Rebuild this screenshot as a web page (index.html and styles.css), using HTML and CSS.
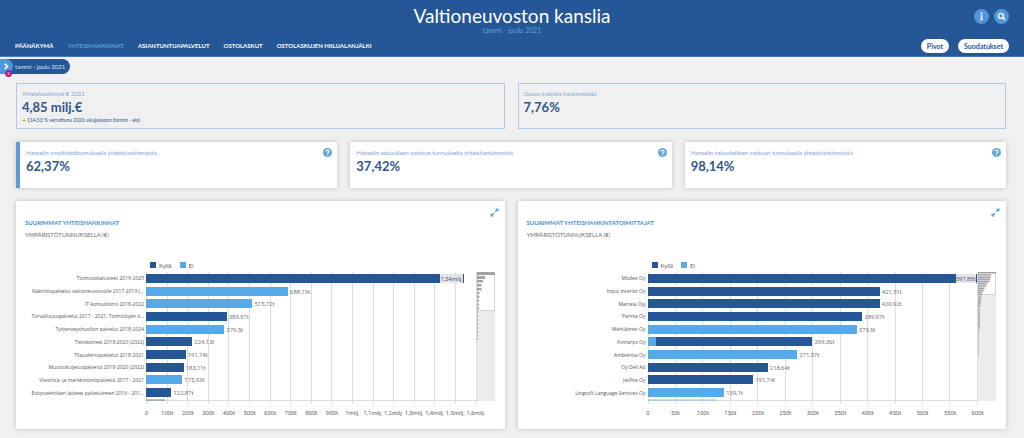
FILE: index.html
```html
<!DOCTYPE html>
<html lang="fi">
<head>
<meta charset="utf-8">
<meta name="viewport" content="width=device-width, initial-scale=1">
<title>Valtioneuvoston kanslia</title>
<link rel="stylesheet" href="styles.css">
</head>
<body>
<svg width="0" height="0" class="defs" aria-hidden="true">
  <symbol id="help" viewBox="0 0 18 18"><circle cx="9" cy="9" r="9" fill="#5fa8dc"/><path d="M6 7.2C6 3.4 12.2 3.4 12.2 7C12.2 9 9.2 9 9.2 11" fill="none" stroke="#fff" stroke-width="2.3"/><circle cx="9.2" cy="13.8" r="1.4" fill="#fff"/></symbol>
  <symbol id="expand" viewBox="0 0 18 18"><path d="M10.500 1H17V7.500L14.800 5.300L11.500 8.600L9.400 6.500L12.700 3.200ZM7.500 17H1V10.500L3.200 12.700L6.500 9.400L8.600 11.500L5.300 14.800Z" fill="#56a5e0"/></symbol>
</svg>
<header class="header">
  <div class="brand">
    <div class="heading">
      <h1 class="title">Valtioneuvoston kanslia</h1>
      <p class="period">tammi - joulu 2021</p>
    </div>
    <div class="tools">
      <button class="round" aria-label="Tietoja"><svg viewBox="0 0 15 15"><path d="M6.700 3.600H8.300V5.200H6.700ZM6.400 6.200H8.300V10.200H8.800V11.200H6.200V10.200H6.800V7.200H6.400Z" fill="#fff"/></svg></button>
      <button class="round" aria-label="Haku"><svg viewBox="0 0 15 15"><circle cx="6.900" cy="6.900" r="2.500" fill="none" stroke="#fff" stroke-width="1.400"/><path d="M8.700 8.700L11 11" stroke="#fff" stroke-width="1.700"/></svg></button>
    </div>
  </div>
  <div class="menu">
    <nav class="nav">
      <a href="#">PÄÄNÄKYMÄ</a>
      <a href="#" class="active" aria-current="page">YHTEISHANKINNAT</a>
      <a href="#">ASIANTUNTIJAPALVELUT</a>
      <a href="#">OSTOLASKUT</a>
      <a href="#">OSTOLASKUJEN HIILIJALANJÄLKI</a>
    </nav>
    <div class="actions">
      <button class="pill">Pivot</button>
      <button class="pill">Suodatukset</button>
    </div>
  </div>
</header>
<button class="chip">
  <span class="chip-icon"><svg viewBox="0 0 15 15"><path d="M5.500 4.300L8.700 7.500L5.500 10.700" fill="none" stroke="#fff" stroke-width="1.900"/></svg><span class="badge">2</span></span>
  tammi - joulu 2021
</button>
<main class="main">
  <section class="row two">
    <article class="kpi outlined">
      <h2 class="kpi-label">Yhteishankinnat € 2021</h2>
      <p class="kpi-value">4,85 milj.€</p>
      <p class="kpi-note"><span class="up"></span>114,53 % verrattuna 2020 aikajaksoon (tammi - elo)</p>
    </article>
    <article class="kpi outlined">
      <h2 class="kpi-label">Osuus kaikista hankinnoista</h2>
      <p class="kpi-value">7,76%</p>
    </article>
  </section>
  <section class="row three">
    <article class="kpi card selected">
      <div><h2 class="kpi-label">Hanselin ympäristötunnuksella yhteishankinnoista</h2><p class="kpi-value">62,37%</p></div>
      <button class="icon" aria-label="Ohje"><svg><use href="#help"/></svg></button>
    </article>
    <article class="kpi card">
      <div><h2 class="kpi-label">Hanselin sosiaalisen vastuun tunnuksella yhteishankinnoista</h2><p class="kpi-value">37,42%</p></div>
      <button class="icon" aria-label="Ohje"><svg><use href="#help"/></svg></button>
    </article>
    <article class="kpi card">
      <div><h2 class="kpi-label">Hanselin taloudellisen vastuun tunnuksella yhteishankinnoista</h2><p class="kpi-value">98,14%</p></div>
      <button class="icon" aria-label="Ohje"><svg><use href="#help"/></svg></button>
    </article>
  </section>
  <section class="row two">
    <article class="card panel">
      <div class="panel-top"><button class="icon" aria-label="Laajenna"><svg><use href="#expand"/></svg></button></div>
      <h2 class="panel-title">SUURIMMAT YHTEISHANKINNAT</h2>
      <p class="panel-sub">YMPÄRISTÖTUNNUKSELLA (€)</p>
      <div class="legend"><span class="key dark"></span>Kyllä<span class="key light"></span>Ei</div>
      <div class="chart">
        <div class="lines"><i></i><i></i><i></i><i></i><i></i><i></i><i></i><i></i><i></i><i></i><i></i><i></i><i></i><i></i><i></i><i></i><i></i></div>
        <div class="bars">
          <div class="item"><span class="name">Toimistokalusteet 2019-2025</span><div class="track"><span class="bar dark full" style="width:96.2%"><b class="inside">1,54milj.</b></span></div></div>
          <div class="item"><span class="name">Käännöspalvelut valtioneuvostolle 2017-2019 (...</span><div class="track"><span class="bar light" style="width:43%"></span>688,19t</div></div>
          <div class="item"><span class="name">IT-konsultointi 2018-2022</span><div class="track"><span class="bar light" style="width:32.2%"></span>515,72t</div></div>
          <div class="item"><span class="name">Turvallisuuspalvelut 2017 - 2021, Toimitilojen k...</span><div class="track"><span class="bar dark" style="width:24.4%"></span>389,97t</div></div>
          <div class="item"><span class="name">Työterveyshuollon palvelut 2018-2024</span><div class="track"><span class="bar light" style="width:23.7%"></span>379,5t</div></div>
          <div class="item"><span class="name">Tietokoneet 2018-2020 (2022)</span><div class="track"><span class="bar dark" style="width:14%"></span>224,13t</div></div>
          <div class="item"><span class="name">Tilauslentopalvelut 2018-2021</span><div class="track"><span class="bar dark" style="width:12%"></span>191,74t</div></div>
          <div class="item"><span class="name">Muuttokuljetuspalvelut 2018-2020 (2022)</span><div class="track"><span class="bar dark" style="width:11.4%"></span>183,11t</div></div>
          <div class="item"><span class="name">Viestintä- ja markkinointipalvelut 2017 - 2021</span><div class="track"><span class="bar light" style="width:11%"></span>175,93t</div></div>
          <div class="item"><span class="name">Esitystekniikan laitteet palveluineen 2016 - 201...</span><div class="track"><span class="bar dark" style="width:7.7%"></span>122,87t</div></div>
          <div class="item cut"><span class="name"></span><div class="track"><span class="bar dark" style="width:5.6%"></span></div></div>
        </div>
        <svg class="mini" viewBox="0 0 18 129" preserveAspectRatio="none"><path d="M0 0H18V129H0Z" fill="#ececec"/><path d="M.5.5H17.500V38.500H.5Z" fill="#fff" stroke="#d4d4d4"/><path d="M0 0H18V3H0ZM0 4H8V7H0ZM0 8H6V10.500H0ZM0 12H4.500V14.500H0ZM0 16H4.500V18.500H0ZM0 20H2.600V22H0ZM0 23.500H2.400V26H0ZM0 27.500H2.200V29.500H0ZM0 31.500H2.200V33.500H0ZM0 35H1.800V37.500H0Z" fill="#a3a3a3"/><path d="M.5 39V68" stroke="#aaa" stroke-dasharray="2.400 1.500"/></svg>
        <div class="axis"><span>0</span><span>100t</span><span>200t</span><span>300t</span><span>400t</span><span>500t</span><span>600t</span><span>700t</span><span>800t</span><span>900t</span><span>1milj.</span><span>1,1milj.</span><span>1,2milj.</span><span>1,3milj.</span><span>1,4milj.</span><span>1,5milj.</span><span>1,6milj.</span></div>
      </div>
    </article>
    <article class="card panel">
      <div class="panel-top"><button class="icon" aria-label="Laajenna"><svg><use href="#expand"/></svg></button></div>
      <h2 class="panel-title">SUURIMMAT YHTEISHANKINTATOIMITTAJAT</h2>
      <p class="panel-sub">YMPÄRISTÖTUNNUKSELLA (€)</p>
      <div class="legend"><span class="key dark"></span>Kyllä<span class="key light"></span>Ei</div>
      <div class="chart">
        <div class="lines"><i></i><i></i><i></i><i></i><i></i><i></i><i></i><i></i><i></i><i></i><i></i><i></i><i></i></div>
        <div class="bars">
          <div class="item"><span class="name">Modeo Oy</span><div class="track"><span class="bar dark full" style="width:99.6%"><b class="inside">597,88t</b></span></div></div>
          <div class="item"><span class="name">Input Interior Oy</span><div class="track"><span class="bar dark" style="width:70.3%"></span>421,51t</div></div>
          <div class="item"><span class="name">Martela Oyj</span><div class="track"><span class="bar dark" style="width:70.2%"></span>420,92t</div></div>
          <div class="item"><span class="name">Palmia Oy</span><div class="track"><span class="bar dark" style="width:65%"></span>389,97t</div></div>
          <div class="item"><span class="name">Mehiläinen Oy</span><div class="track"><span class="bar light" style="width:63.3%"></span>379,5t</div></div>
          <div class="item"><span class="name">Kinnarps Oy</span><div class="track"><span class="bar dark" style="width:49.9%"><span class="part"></span></span>299,36t</div></div>
          <div class="item"><span class="name">Ambientia Oy</span><div class="track"><span class="bar light" style="width:45.3%"></span>271,57t</div></div>
          <div class="item"><span class="name">Oy Dell Ab</span><div class="track"><span class="bar dark" style="width:36.4%"></span>218,64t</div></div>
          <div class="item"><span class="name">Jetflite Oy</span><div class="track"><span class="bar dark" style="width:32%"></span>191,74t</div></div>
          <div class="item"><span class="name">Lingsoft Language Services Oy</span><div class="track"><span class="bar light" style="width:23.2%"></span>139,1t</div></div>
          <div class="item cut"><span class="name"></span><div class="track"><span class="bar light" style="width:20.8%"></span></div></div>
        </div>
        <svg class="mini" viewBox="0 0 18 129" preserveAspectRatio="none"><path d="M0 0H18V129H0Z" fill="#ececec"/><path d="M.5.5H17.500V22.500H.5Z" fill="#fff" stroke="#d4d4d4"/><path d="M0 0H18V1.600H0ZM0 2.200H13V3.800H0ZM0 4.400H12.700V6H0ZM0 6.600H12V8.200H0ZM0 8.800H11.500V10.400H0ZM0 11H9V12.600H0ZM0 13.200H8.300V14.800H0ZM0 15.400H6.600V17H0ZM0 17.600H5.800V19.200H0ZM0 19.800H4.300V21.400H0ZM0 22H3.800V23.600H0ZM0 24.200H3.600V25.800H0ZM0 26.400H3V28H0ZM0 28.600H3V30.200H0ZM0 30.800H2.600V32.400H0ZM0 33H2.400V34.600H0Z" fill="#a3a3a3"/><path d="M1 35.200V58" stroke="#aaa" stroke-width="2" stroke-dasharray="1.600 .6"/><path d="M.5 58V84" stroke="#bbb" stroke-dasharray="1.600 .6"/></svg>
        <div class="axis"><span>0</span><span>50t</span><span>100t</span><span>150t</span><span>200t</span><span>250t</span><span>300t</span><span>350t</span><span>400t</span><span>450t</span><span>500t</span><span>550t</span><span>600t</span></div>
      </div>
    </article>
  </section>
</main>
</body>
</html>
```
FILE: styles.css
```css
* { box-sizing: border-box; }
body {
  margin: 0;
  background: #f0f0f0;
  font-family: Lato, "Open Sans", sans-serif;
  color: #255695;
}
h1, h2, p { margin: 0; font-weight: 400; }
button { border: 0; padding: 0; font-family: inherit; cursor: pointer; }
svg { display: block; }
.defs { position: absolute; }

.header { background: #255695; border-bottom: 1px solid #4a79b8; padding: 5px 15px 3px; }
.brand { display: grid; grid-template-columns: 1fr auto 1fr; align-items: start; }
.heading { grid-column: 2; text-align: center; }
.title { color: #fff; font-size: 19px; line-height: 22px; }
.period { color: #5fa3dc; font-size: 7px; line-height: 7px; }
.tools { display: flex; justify-content: flex-end; gap: 5px; padding-top: 4px; }
.round { width: 15px; height: 15px; border-radius: 50%; background: #5096dc; }
.menu { display: flex; justify-content: space-between; align-items: center; padding-top: 5px; }
.nav { display: flex; gap: 14px; }
.nav a { color: #fff; font-size: 6px; font-weight: 700; line-height: 10px; text-decoration: none; }
.nav .active { color: #5a9fdc; }
.actions { display: flex; gap: 9px; }
.pill { background: #fff; color: #255695; border-radius: 7px; padding: 0 6px; font-size: 7px; font-weight: 700; line-height: 14px; }

.chip {
  display: flex; align-items: center; gap: 2px;
  margin-top: 2px; padding-right: 5px; height: 15px;
  background: #255695; color: #dfe8f3;
  border-radius: 0 8px 8px 0;
  font-size: 6px;
}
.chip-icon { position: relative; width: 13px; height: 15px; background: #5096dc; border-radius: 0 8px 8px 0; }
.chip-icon svg { width: 13px; height: 15px; }
.badge {
  position: absolute; right: 1px; bottom: -3px;
  width: 7px; height: 7px; border-radius: 50%;
  background: #b01e86; color: #fff; font-size: 4px; line-height: 7px; text-align: center;
}

.main { display: grid; gap: 13px; padding: 9px 18px 9px 16px; }
.row { display: grid; gap: 13px; }
.two { grid-template-columns: 1fr 1fr; }
.three { grid-template-columns: 1fr 1fr 1fr; }
.card { background: #fff; box-shadow: 0 0 5px rgba(0, 0, 0, .2); }
.kpi { min-height: 46px; padding: 5px 5px 4px; }
.outlined { border: 1px solid #b0cae6; }
.kpi.card { display: flex; justify-content: space-between; align-items: flex-start; padding: 6px 5px 6px 6px; }
.kpi.selected { border-left: 4px solid #5f99d8; }
.kpi-label { color: #7fa6d8; font-size: 6px; line-height: 9px; }
.kpi-value { color: #2f568f; font-size: 13px; font-weight: 700; line-height: 18px; }
.kpi-note { display: flex; align-items: center; gap: 1px; color: #2f568f; font-size: 5px; line-height: 8px; }
.up { border: 2px solid transparent; border-top: 0; border-bottom-color: #8cb33c; }
.icon { width: 9px; height: 9px; background: none; }
.icon svg { width: 9px; height: 9px; }

.panel { padding: 7px 10px 11px 9px; }
.panel-top { display: flex; justify-content: flex-end; margin-right: -4px; }
.panel-title { color: #4a90cc; font-size: 6px; font-weight: 700; line-height: 12px; }
.panel-sub { color: #6f6f6f; font-size: 6px; line-height: 12px; }
.legend { display: flex; align-items: center; gap: 3px; height: 12px; margin: 18px 0 1px 125px; color: #666; font-size: 6px; }
.key { width: 6px; height: 6px; }
.key.light { margin-left: 5px; }
.dark { background: #255695; }
.light { background: #56aaea; }

.chart { display: grid; grid-template-columns: 121px 1fr 18px; grid-template-rows: 129px auto; color: #666; }
.lines { grid-area: 1 / 2; display: flex; justify-content: space-between; height: 132px; }
.lines i { width: 1px; background: #dedede; }
.bars { grid-area: 1 / 1 / 2 / 3; display: grid; grid-template-rows: repeat(10, 1fr) 2px; }
.item { display: grid; grid-template-columns: 121px 1fr; align-items: center; min-height: 0; }
.name { padding-right: 2px; text-align: right; white-space: nowrap; font-family: "Open Sans", sans-serif; font-size: 5px; line-height: 8px; color: #555; }
.track { display: flex; align-items: center; gap: 2px; font-family: Roboto, sans-serif; font-size: 6px; line-height: 9px; color: #777; }
.bar { display: flex; flex: none; height: 9px; }
.full { justify-content: flex-end; }
.inside { margin-right: 1px; background: #e2e5ea; font-weight: 400; color: #666; }
.part { width: 8px; background: #56aaea; }
.cut { align-items: start; border-bottom: 1px solid #ddd; margin-left: 121px; grid-template-columns: 1fr; }
.cut .name { display: none; }
.cut .bar { height: 2px; opacity: .35; }
.mini { grid-area: 1 / 3; width: 18px; height: 129px; }
.axis { grid-area: 2 / 2; display: flex; justify-content: space-between; padding-top: 7px; font-family: Roboto, sans-serif; font-size: 6px; line-height: 10px; }
.axis span { display: flex; justify-content: center; width: 1px; white-space: nowrap; }
```
